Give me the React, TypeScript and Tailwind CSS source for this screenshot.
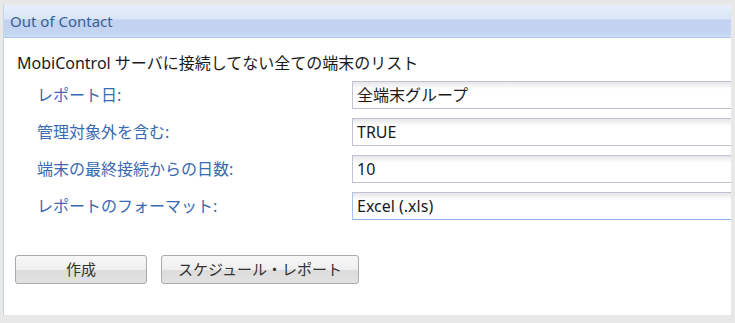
const rows = [
  { label: "レポート日:", value: "全端末グループ" },
  { label: "管理対象外を含む:", value: "TRUE" },
  { label: "端末の最終接続からの日数:", value: "10" },
  { label: "レポートのフォーマット:", value: "Excel (.xls)", focus: true },
];

export default function App() {
  return (
    <div
      className="w-[735px] h-[323px] bg-[#e8e8e8] pt-[5px] pl-[3px] overflow-hidden"
      style={{ fontFamily: '"Noto Sans", "Noto Sans CJK JP", sans-serif' }}
    >
      <div className="w-[728px] h-[310px] bg-white border-l border-[#c4d2ea] overflow-hidden flex flex-col">
        <div className="h-[33px] shrink-0 border-b border-[#b3c9ef] bg-[linear-gradient(to_bottom,#e6eef9_0%,#dae6f6_44%,#c0d2f0_47%,#c3d5f1_90%,#cddcf3_100%)] flex items-center pl-[6px]">
          <span className="text-[15px] text-[#3d5f96] leading-none">Out of Contact</span>
        </div>
        <div className="pl-[13px] pt-[15px] text-[16px] leading-[20px] text-[#1a1a1a]">
          MobiControl サーバに接続してない全ての端末のリスト
        </div>
        <div className="flex flex-col gap-[9px] mt-[8px]">
          {rows.map((r) => (
            <div key={r.label} className="flex items-center h-[28px]">
              <div className="w-[348px] shrink-0 pl-[33px] text-[16px] text-[#3a6ab2] leading-none">
                {r.label}
              </div>
              <div
                className={
                  "w-[420px] shrink-0 h-[28px] border border-[#c2c2d6] bg-[linear-gradient(to_bottom,#e6e6ea_0px,#ffffff_7px)] pl-[4px] flex items-center text-[16px] text-[#1a1a1a] leading-none " +
                  (r.focus ? "border-b-[#8db3e2] border-l-[#a9c3e6]" : "")
                }
              >
                {r.value}
              </div>
            </div>
          ))}
        </div>
        <div className="flex gap-[14px] pl-[11px] mt-[35px]">
          <button className="w-[132px] h-[29px] rounded-[3px] border border-[#a9a9a9] bg-[linear-gradient(to_bottom,#f7f7f7_0%,#efefef_50%,#dcdcdc_52%,#e2e2e2_100%)] text-[15px] text-[#333] leading-none flex items-center justify-center">
            作成
          </button>
          <button className="w-[198px] h-[29px] rounded-[3px] border border-[#a9a9a9] bg-[linear-gradient(to_bottom,#f7f7f7_0%,#efefef_50%,#dcdcdc_52%,#e2e2e2_100%)] text-[15px] text-[#333] leading-none flex items-center justify-center">
            スケジュール・レポート
          </button>
        </div>
      </div>
    </div>
  );
}
